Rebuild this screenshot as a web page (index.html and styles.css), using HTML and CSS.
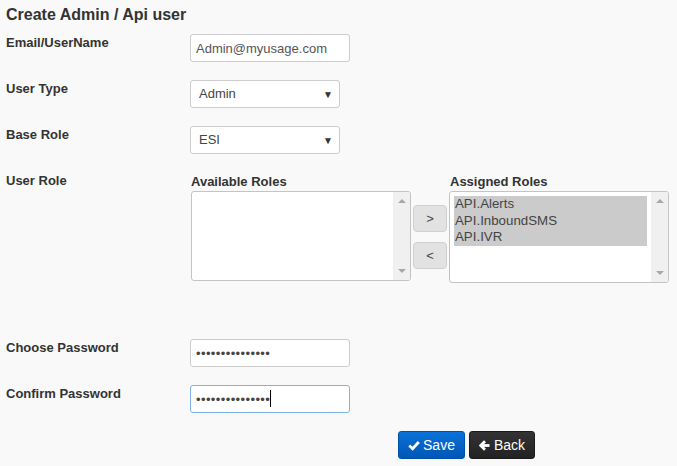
FILE: index.html
```html
<!DOCTYPE html>
<html>
<head>
<meta charset="utf-8">
<link rel="stylesheet" href="styles.css">
</head>
<body>
<div class="page">
  <h3 class="title">Create Admin / Api user</h3>

  <div class="row">
    <label class="lbl">Email/UserName</label>
    <input class="ctl text-input" type="text" value="Admin@myusage.com">
  </div>

  <div class="row">
    <label class="lbl">User Type</label>
    <div class="ctl select">Admin<span class="arrow">&#9660;</span></div>
  </div>

  <div class="row">
    <label class="lbl">Base Role</label>
    <div class="ctl select">ESI<span class="arrow">&#9660;</span></div>
  </div>

  <div class="row roles-row">
    <label class="lbl">User Role</label>
    <div class="roles">
      <div class="role-col">
        <div class="role-title">Available Roles</div>
        <div class="listbox avail">
          <div class="items"></div>
          <div class="sbar"><span class="up"></span><span class="down"></span></div>
        </div>
      </div>
      <div class="move-btns">
        <button class="move">&gt;</button>
        <button class="move">&lt;</button>
      </div>
      <div class="role-col">
        <div class="role-title">Assigned Roles</div>
        <div class="listbox assigned">
          <div class="items">
            <div class="opt sel">API.Alerts</div>
            <div class="opt sel">API.InboundSMS</div>
            <div class="opt sel">API.IVR</div>
          </div>
          <div class="sbar"><span class="up"></span><span class="down"></span></div>
        </div>
      </div>
    </div>
  </div>

  <div class="row">
    <label class="lbl">Choose Password</label>
    <input class="ctl text-input pw" type="password" value="aaaaaaaaaaaaaaa">
  </div>

  <div class="row">
    <label class="lbl">Confirm Password</label>
    <span class="pw-wrap">
      <input class="ctl text-input pw focused" type="password" value="aaaaaaaaaaaaaaa">
      <span class="text-caret"></span>
    </span>
  </div>

  <div class="actions">
    <button class="btn save">
      <svg width="12" height="11" viewBox="0 0 12 11"><polyline points="1.3,5.6 4.6,8.8 10.8,2" fill="none" stroke="#fff" stroke-width="2.8"/></svg>
      <span>Save</span>
    </button>
    <button class="btn back">
      <svg width="11" height="11" viewBox="0 0 11 11"><line x1="3" y1="5.5" x2="10.5" y2="5.5" stroke="#fff" stroke-width="2.8"/><polyline points="6,1.3 1.8,5.5 6,9.7" fill="none" stroke="#fff" stroke-width="2.8" stroke-linejoin="miter"/></svg>
      <span>Back</span>
    </button>
  </div>
</div>
</body>
</html>
```

FILE: styles.css
```css
html, body {
  margin: 0;
  padding: 0;
  background: #f9f9f9;
}
body {
  font-family: "Liberation Sans", Arial, sans-serif;
  color: #333;
  font-size: 13px;
}
.page {
  padding: 5px 0 0 6px;
}
.title {
  margin: 0 0 9px 0;
  font-size: 16px;
  line-height: 20px;
  font-weight: bold;
  color: #333;
}
.row {
  display: flex;
  align-items: flex-start;
  height: 28px;
  margin-bottom: 18px;
}
.lbl {
  width: 184px;
  flex: none;
  font-weight: bold;
  font-size: 13px;
  line-height: 18px;
  color: #333;
}
.ctl {
  box-sizing: border-box;
  height: 28px;
  background: #fff;
  border: 1px solid #ccc;
  border-radius: 3px;
  font-family: "Liberation Sans", Arial, sans-serif;
  font-size: 13px;
  color: #555;
  margin: 0;
}
.text-input {
  width: 160px;
  padding: 0 5px;
  outline: none;
}
.pw {
  letter-spacing: 0.4px;
  color: #444;
}
.focused {
  border-color: #7fb3e6;
}
.pw-wrap {
  position: relative;
  display: block;
}
.text-caret {
  position: absolute;
  left: 80px;
  top: 5px;
  width: 1px;
  height: 17px;
  background: #000;
}
.select {
  width: 150px;
  padding: 0 6px 0 8px;
  line-height: 26px;
  display: flex;
  justify-content: space-between;
  color: #444;
}
.select .arrow {
  font-size: 10px;
  color: #333;
  line-height: 27px;
}
.roles-row {
  height: auto;
  margin-bottom: 56px;
}
.roles {
  display: flex;
  align-items: flex-start;
}
.role-title {
  font-weight: bold;
  font-size: 13px;
  line-height: 18px;
  padding-top: 1px;
  padding-left: 1px;
}
.listbox {
  box-sizing: border-box;
  width: 220px;
  background: #fff;
  border: 1px solid #c4c4c4;
  border-radius: 3px;
  display: flex;
}
.listbox.avail {
  height: 90px;
  margin-left: 1px;
}
.listbox.assigned {
  height: 92px;
}
.items {
  flex: 1;
  padding: 4px 4px 4px 4px;
}
.opt {
  font-size: 13.3px;
  line-height: 16.6px;
  color: #444;
  padding-left: 1px;
}
.opt.sel {
  background: #cbcbcb;
}
.sbar {
  width: 17px;
  flex: none;
  background: #f0f0f0;
  border-radius: 0 2px 2px 0;
  display: flex;
  flex-direction: column;
  justify-content: space-between;
  align-items: center;
  padding: 7px 0 7px;
  box-sizing: border-box;
}
.sbar .up {
  width: 0;
  height: 0;
  border-left: 4px solid transparent;
  border-right: 4px solid transparent;
  border-bottom: 4px solid #a8a8a8;
}
.sbar .down {
  width: 0;
  height: 0;
  border-left: 4px solid transparent;
  border-right: 4px solid transparent;
  border-top: 4px solid #a8a8a8;
}
.move-btns {
  display: flex;
  flex-direction: column;
  gap: 10px;
  padding-top: 33px;
  margin: 0 2px 0 2px;
}
.move {
  box-sizing: border-box;
  width: 34px;
  height: 27px;
  background: #e2e2e2;
  border: 1px solid #d0d0d0;
  border-radius: 4px;
  font-family: "Liberation Sans", Arial, sans-serif;
  font-size: 13px;
  color: #445;
  padding: 0;
  margin: 0;
}
.assigned-col {
  margin-left: 0;
}
.actions {
  display: flex;
  gap: 4px;
  padding-left: 392px;
}
.btn {
  box-sizing: border-box;
  height: 28px;
  border-radius: 3px;
  display: flex;
  align-items: center;
  justify-content: center;
  gap: 3px;
  font-family: "Liberation Sans", Arial, sans-serif;
  font-size: 14px;
  color: #fff;
  padding: 0;
  margin: 0;
}
.save {
  width: 67px;
  background: linear-gradient(#0a72d8, #0056b6);
  border: 1px solid #0050a8;
}
.back {
  width: 66px;
  background: linear-gradient(#333, #222);
  border: 1px solid #1a1a1a;
  gap: 4px;
}
```
